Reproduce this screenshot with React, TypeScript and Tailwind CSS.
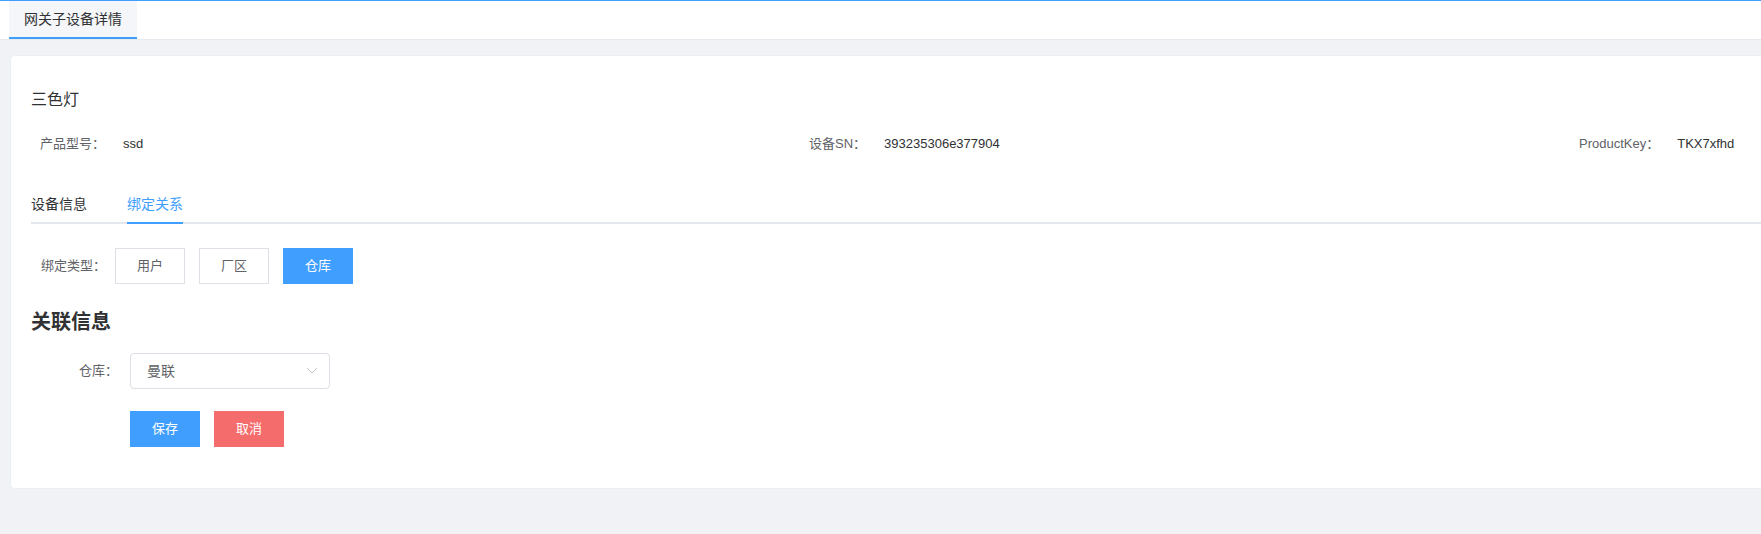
import * as React from 'react'

const infoItems = [
    { label: '产品型号：', value: 'ssd' },
    { label: '设备SN：', value: '393235306e377904' },
    { label: 'ProductKey：', value: 'TKX7xfhd' },
]

const bindTypes = ['用户', '厂区', '仓库']

function ChevronDown() {
    return (
        <svg width="12" height="8" viewBox="0 0 12 8" fill="none">
            <polyline points="1,1 6,6 11,1" stroke="#c0c4cc" strokeWidth="1" />
        </svg>
    )
}

export default function App() {
    const [activeTab, setActiveTab] = React.useState('bind')
    const [bindType, setBindType] = React.useState('仓库')

    return (
        <div
            className="h-[534px] w-full overflow-hidden bg-[#f0f2f5] text-[#303133]"
            style={{ fontFamily: '"Liberation Sans", "Noto Sans CJK SC", sans-serif' }}
        >
            {/* Top tag bar */}
            <div className="flex h-[40px] border-t border-b border-t-[#409eff] border-b-[#e6e9ee] bg-white pl-[9px]">
                <div className="flex h-full items-center border-b-2 border-[#409eff] bg-[#f4f6f9] px-[15px] text-[14px] text-[#303133]">
                    网关子设备详情
                </div>
            </div>

            {/* Detail card */}
            <div className="ml-[10px] mt-[15px] w-[1800px] rounded-[4px] border border-[#ebeef5] bg-white pb-[41px] pl-[20px] pt-[32px]">
                <div className="text-[16px] leading-[24px] text-[#303133]">三色灯</div>

                <div className="mt-[22px] grid grid-cols-[769px_770px_1fr] pl-[9px] text-[13px] leading-[20px]">
                    {infoItems.map((item) => (
                        <div key={item.label} className="flex">
                            <span className="text-[#606266]">{item.label}</span>
                            <span className="ml-[18px] text-[#303133]">{item.value}</span>
                        </div>
                    ))}
                </div>

                {/* Tabs */}
                <div className="mt-[30px] flex h-[40px] border-b-2 border-[#e4e7ed] text-[14px]">
                    <button
                        className={`-mb-[2px] h-[40px] border-b-2 pr-[40px] leading-[40px] ${activeTab === 'info' ? 'border-[#409eff] text-[#409eff]' : 'border-transparent text-[#303133]'}`}
                        onClick={() => setActiveTab('info')}
                    >
                        设备信息
                    </button>
                    <button
                        className={`-mb-[2px] h-[40px] border-b-2 leading-[40px] ${activeTab === 'bind' ? 'border-[#409eff] text-[#409eff]' : 'border-transparent text-[#303133]'}`}
                        onClick={() => setActiveTab('bind')}
                    >
                        绑定关系
                    </button>
                </div>

                {/* Bind type */}
                <div className="mt-[24px] flex items-center pl-[10px] text-[13px]">
                    <span className="w-[74px] text-[#606266]">绑定类型：</span>
                    <div className="flex gap-[14px]">
                        {bindTypes.map((t) => (
                            <button
                                key={t}
                                onClick={() => setBindType(t)}
                                className={
                                    bindType === t
                                        ? 'h-[36px] w-[70px] border border-[#409eff] bg-[#409eff] text-white'
                                        : 'h-[36px] w-[70px] border border-[#dcdfe6] bg-white text-[#606266]'
                                }
                            >
                                {t}
                            </button>
                        ))}
                    </div>
                </div>

                <div className="mt-[24px] text-[20px] font-bold leading-[28px] text-[#303133]">关联信息</div>

                {/* Form */}
                <div className="mt-[17px] flex items-center">
                    <label className="w-[99px] pr-[12px] text-right text-[13px] text-[#606266]">仓库：</label>
                    <div className="flex h-[36px] w-[200px] items-center justify-between rounded-[4px] border border-[#dcdfe6] pl-[16px] pr-[11px] text-[14px] text-[#606266]">
                        <span>曼联</span>
                        <ChevronDown />
                    </div>
                </div>

                <div className="mt-[22px] flex gap-[14px] pl-[99px] text-[13px] text-white">
                    <button className="h-[36px] w-[70px] bg-[#409eff]">保存</button>
                    <button className="h-[36px] w-[70px] bg-[#f56c6c]">取消</button>
                </div>
            </div>
        </div>
    )
}
